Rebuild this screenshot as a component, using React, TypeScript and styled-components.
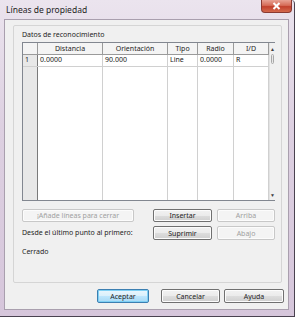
import React from "react"
import styled, { createGlobalStyle } from "styled-components"

const GlobalStyle = createGlobalStyle`
    body {
        margin: 0;
        background: #ffffff;
        font-family: "Noto Sans", "Open Sans", sans-serif;
    }
`

const Window = styled.div`
    box-sizing: border-box;
    width: 295px;
    height: 317px;
    padding: 0 5px 6px 4px;
    display: flex;
    flex-direction: column;
    background: linear-gradient(180deg, #ebe4ee 0%, #ddd0e1 40%, #d6c6db 100%);
    border-right: 1px solid #4a4250;
    border-bottom: 1px solid #4a4250;
    border-radius: 0 4px 0 0;
`

const TitleBar = styled.div`
    height: 19px;
    display: flex;
    align-items: flex-start;
`

const Title = styled.div`
    font-size: 8.5px;
    color: #1e1e1e;
    margin: 4px 0 0 2px;
`

const CloseButton = styled.div`
    margin-left: auto;
    margin-right: -3px;
    width: 31px;
    height: 13px;
    display: flex;
    align-items: center;
    justify-content: center;
    box-sizing: border-box;
    border: 1px solid #8a3a32;
    border-top: none;
    border-radius: 0 0 4px 4px;
    background: linear-gradient(180deg, #e8a294 0%, #d66c58 45%, #c2402c 55%, #d46a4e 100%);
`

const Client = styled.div`
    flex: 1;
    display: flex;
    flex-direction: column;
    background: #f0f0f0;
    border: 1px solid #a99fae;
`

const GroupBox = styled.div`
    margin: 5px 6px 0 8px;
    height: 258px;
    box-sizing: border-box;
    border: 1px solid #d5d5d5;
    border-radius: 2px;
    padding: 4px 6px 0 8px;
    display: flex;
    flex-direction: column;
`

const Label = styled.div`
    font-size: 7px;
    line-height: 10px;
    color: #1e1e1e;
    white-space: nowrap;
`

const GridWrap = styled.div`
    margin-top: 2px;
    display: flex;
    height: 157px;
    border: 1px solid #828790;
    background: #ffffff;
`

const Table = styled.table`
    width: 240px;
    height: 100%;
    border-collapse: collapse;
    table-layout: fixed;
    font-size: 7px;
    color: #1e1e1e;
`

const HeadCell = styled.th<{ $w: number }>`
    width: ${(p) => p.$w}px;
    height: 11px;
    padding: 0;
    font-weight: normal;
    text-align: center;
    color: #1e1e1e;
    background: #f4f4f4;
    border-right: 1px solid #9a9a9a;
    border-bottom: 1px solid #9a9a9a;
`

const RowHead = styled.td`
    padding: 0 0 0 2px;
    color: #1e1e1e;
    background: #e8e8e8;
    border-right: 1px solid #7a7a7a;
    border-bottom: 1px solid #d0d0d0;
    vertical-align: top;
`

const Cell = styled.td`
    height: 11px;
    padding: 0 0 0 2px;
    color: #1a1a1a;
    border-right: 1px solid #d0d0d0;
    border-bottom: 1px solid #d0d0d0;
    white-space: nowrap;
    vertical-align: top;
`

const Filler = styled.td<{ $head?: boolean }>`
    padding: 0;
    background: ${(p) => (p.$head ? "#e8e8e8" : "#ffffff")};
    border-right: 1px solid ${(p) => (p.$head ? "#7a7a7a" : "#d0d0d0")};
`

const ScrollBar = styled.div`
    width: 12px;
    margin-left: auto;
    display: flex;
    flex-direction: column;
    background: #f0f0f0;
    border-left: 1px solid #e2e2e2;
    font-size: 5px;
    color: #404040;
`

const Arrow = styled.div<{ $bottom?: boolean }>`
    height: 11px;
    margin-top: ${(p) => (p.$bottom ? "auto" : "0")};
    display: flex;
    align-items: center;
    justify-content: center;
`

const Thumb = styled.div`
    height: 10px;
    margin: 0 1px;
    box-sizing: border-box;
    border: 1px solid #a8a8a8;
    border-radius: 2px;
    background: linear-gradient(90deg, #f2f2f2, #dcdcdc);
`

const Actions = styled.div`
    margin-top: 8px;
    display: grid;
    grid-template-columns: 1fr 59px 58px;
    grid-template-rows: 13px 14px;
    column-gap: 5px;
    row-gap: 4px;
    align-items: center;
`

const Button = styled.div<{ $disabled?: boolean; $default?: boolean; $w?: number; $gap?: number }>`
    box-sizing: border-box;
    height: 100%;
    width: ${(p) => (p.$w ? `${p.$w}px` : "auto")};
    margin-left: ${(p) => p.$gap ?? 0}px;
    display: flex;
    align-items: center;
    justify-content: center;
    font-size: 7px;
    color: ${(p) => (p.$disabled ? "#a0a0a0" : "#1e1e1e")};
    border: 1px solid ${(p) => (p.$disabled ? "#c8c8c8" : p.$default ? "#3c7fb1" : "#707070")};
    border-radius: 2px;
    background: ${(p) =>
        p.$disabled
            ? "#f4f4f4"
            : p.$default
            ? "linear-gradient(180deg, #eaf6fd 0%, #d9f0fc 50%, #bee6fd 51%, #a7d9f5 100%)"
            : "linear-gradient(180deg, #f2f2f2 0%, #ebebeb 50%, #dddddd 51%, #cfcfcf 100%)"};
    box-shadow: ${(p) => (p.$default ? "inset 0 0 0 1px #7fd0f4" : "inset 0 0 0 1px #fcfcfc")};
`

const Status = styled(Label)`
    margin-top: 7px;
`

const Footer = styled.div`
    margin-top: auto;
    padding: 0 4px 6px 0;
    display: flex;
    justify-content: flex-end;
    height: 14px;
`

const columns = [
    { name: "", w: 14 },
    { name: "Distancia", w: 64 },
    { name: "Orientación", w: 64 },
    { name: "Tipo", w: 29 },
    { name: "Radio", w: 35 },
    { name: "I/D", w: 34 },
]

export default function App() {
    return (
        <>
            <GlobalStyle />
            <Window>
                <TitleBar>
                    <Title>Líneas de propiedad</Title>
                    <CloseButton>
                        <svg width="9" height="8" viewBox="0 0 9 8">
                            <path d="M1.5 1 L7.5 7 M7.5 1 L1.5 7" stroke="#ffffff" strokeWidth="2" />
                        </svg>
                    </CloseButton>
                </TitleBar>
                <Client>
                    <GroupBox>
                        <Label>Datos de reconocimiento</Label>
                        <GridWrap>
                            <Table>
                                <thead>
                                    <tr>
                                        {columns.map((c) => (
                                            <HeadCell key={c.name} $w={c.w}>
                                                {c.name}
                                            </HeadCell>
                                        ))}
                                    </tr>
                                </thead>
                                <tbody>
                                    <tr>
                                        <RowHead>1</RowHead>
                                        <Cell>0.0000</Cell>
                                        <Cell>90.000</Cell>
                                        <Cell>Line</Cell>
                                        <Cell>0.0000</Cell>
                                        <Cell>R</Cell>
                                    </tr>
                                    <tr>
                                        <Filler $head />
                                        <Filler />
                                        <Filler />
                                        <Filler />
                                        <Filler />
                                        <Filler />
                                    </tr>
                                </tbody>
                            </Table>
                            <ScrollBar>
                                <Arrow>▲</Arrow>
                                <Thumb />
                                <Arrow $bottom>▼</Arrow>
                            </ScrollBar>
                        </GridWrap>
                        <Actions>
                            <Button $disabled $w={112}>
                                ¡Añade líneas para cerrar
                            </Button>
                            <Button>Insertar</Button>
                            <Button $disabled>Arriba</Button>
                            <Label>Desde el último punto al primero:</Label>
                            <Button>Suprimir</Button>
                            <Button $disabled>Abajo</Button>
                        </Actions>
                        <Status>Cerrado</Status>
                    </GroupBox>
                    <Footer>
                        <Button $default $w={52}>
                            Aceptar
                        </Button>
                        <Button $w={59} $gap={12}>
                            Cancelar
                        </Button>
                        <Button $w={60} $gap={4}>
                            Ayuda
                        </Button>
                    </Footer>
                </Client>
            </Window>
        </>
    )
}
